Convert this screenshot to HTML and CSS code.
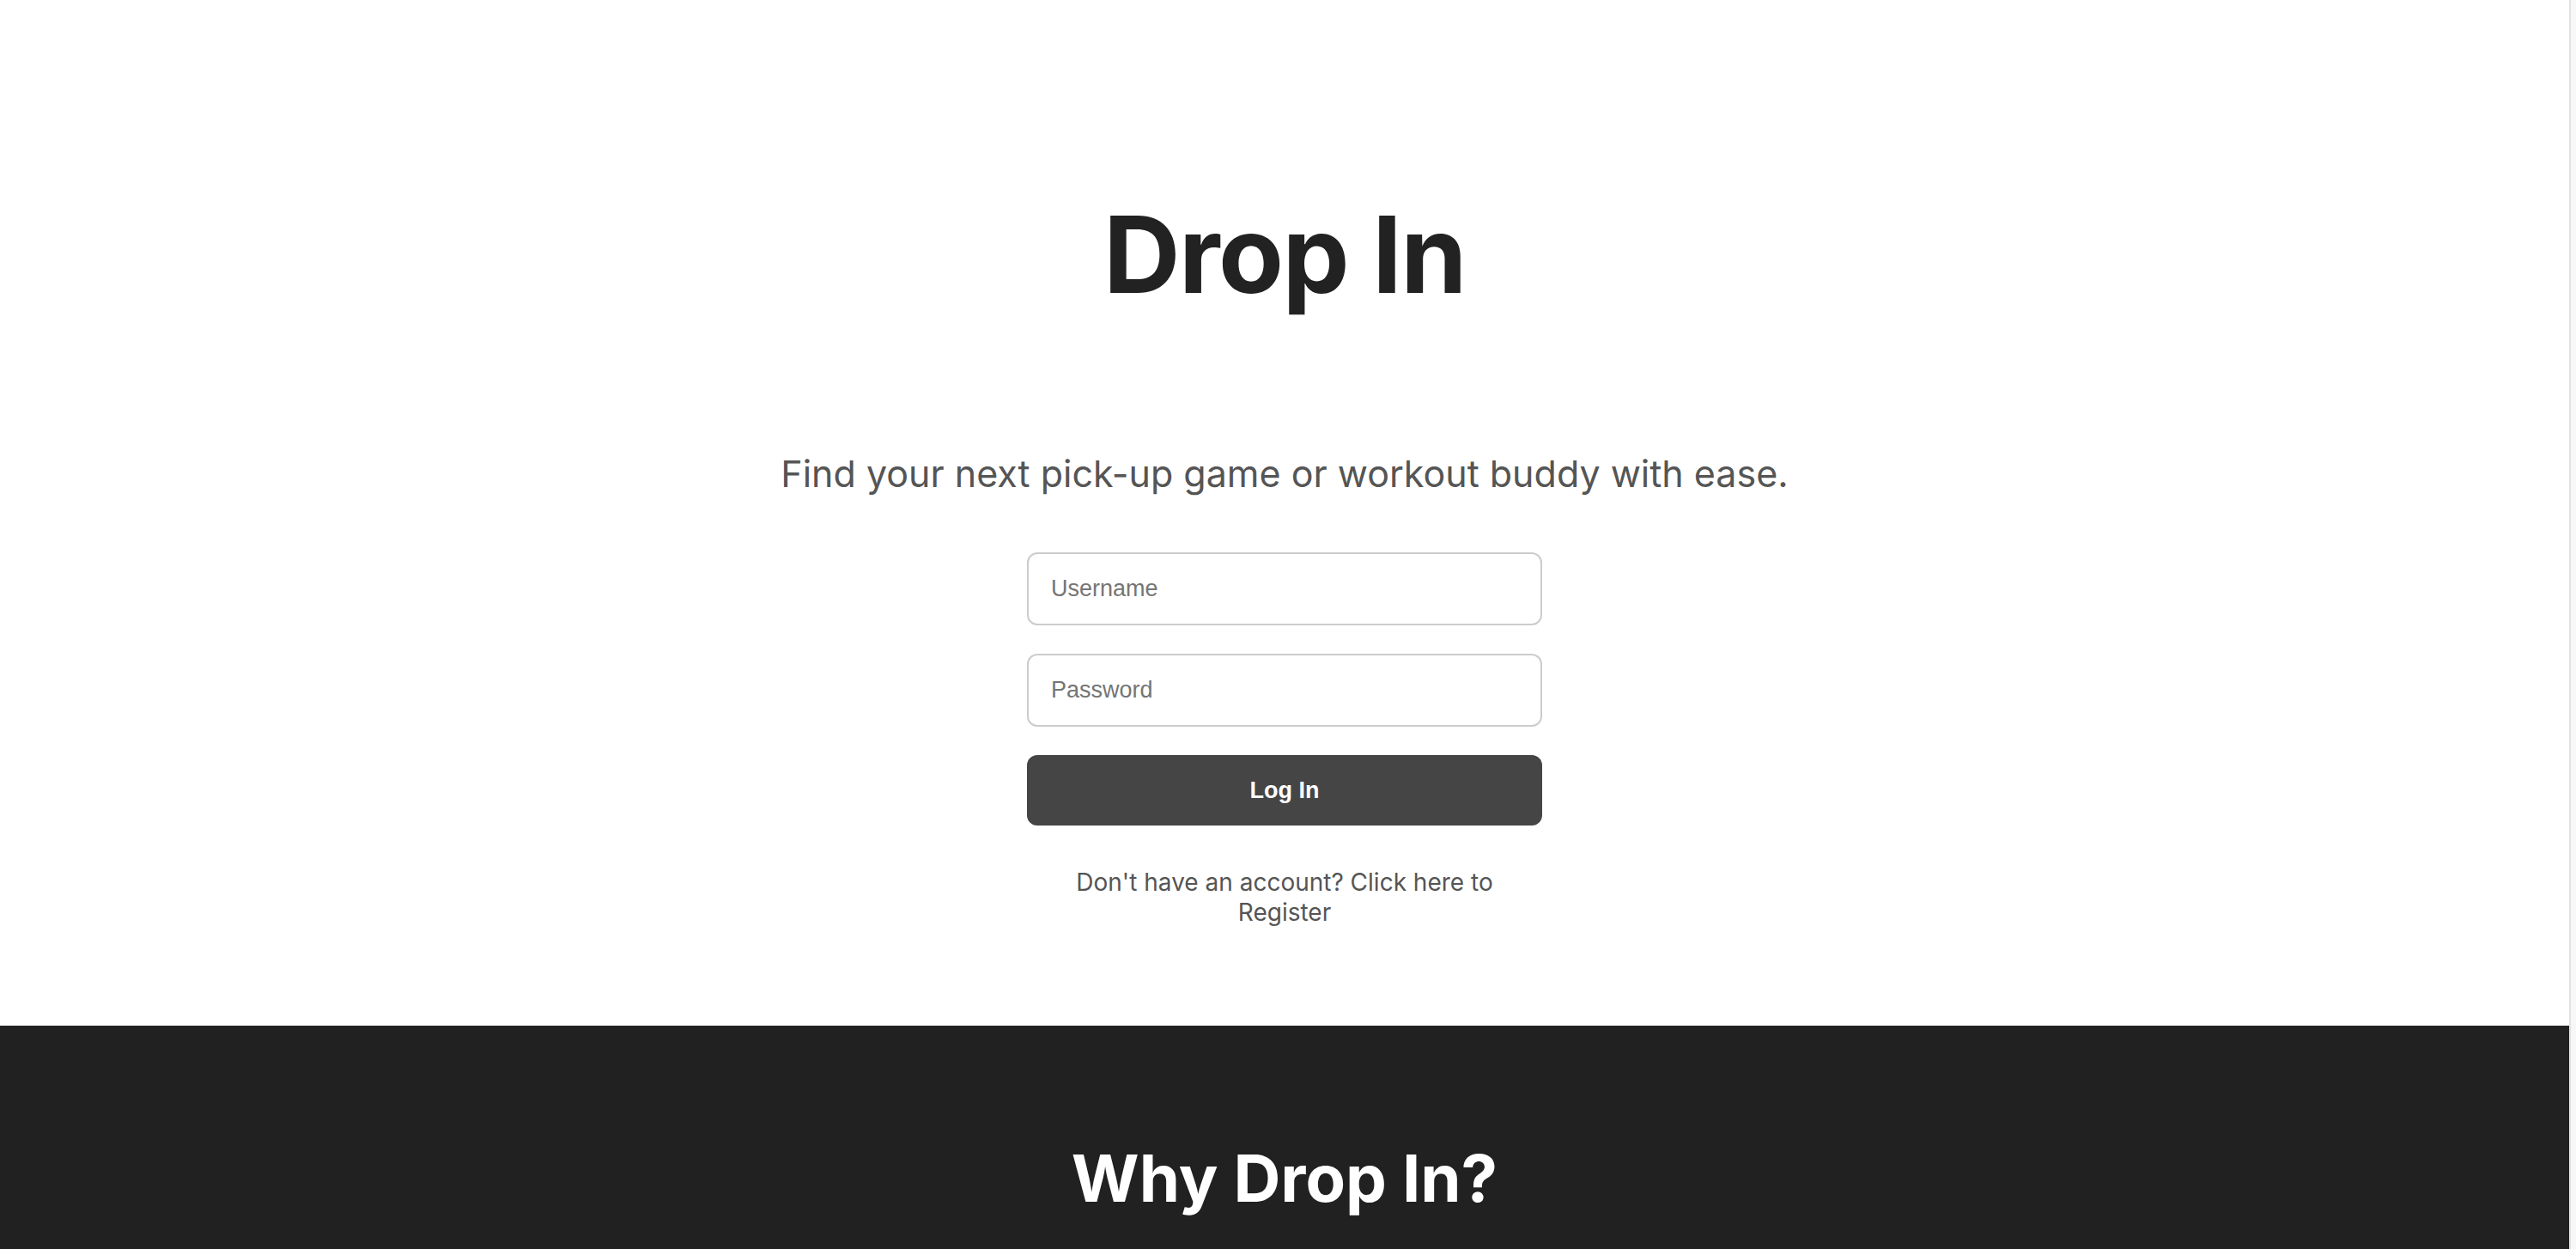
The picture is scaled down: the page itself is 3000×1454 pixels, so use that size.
FILE: index.html
```html
<!DOCTYPE html>
<html lang="en">
<head>
<meta charset="utf-8">
<title>Drop In</title>
<link rel="stylesheet" href="styles.css">
</head>
<body>
  <section class="hero">
    <h1 class="hero-title">Drop In</h1>
    <p class="hero-subtitle">Find your next pick-up game or workout buddy with ease.</p>
    <form class="login-form">
      <input class="field" type="text" placeholder="Username">
      <input class="field" type="password" placeholder="Password">
      <button class="login-btn" type="button">Log In</button>
    </form>
    <p class="register-link">Don't have an account? Click here to Register</p>
  </section>
  <section class="why">
    <h2 class="why-title">Why Drop In?</h2>
  </section>
</body>
</html>
```
FILE: styles.css
```css
html {
  background: #f7f7f7;
}
body {
  margin: 0 6px 0 0;
  border-right: 2px solid #e2e2e2;
  background: #ffffff;
  font-family: Inter, "Noto Sans", sans-serif;
  color: #222222;
}
.hero {
  height: 1194px;
  box-sizing: border-box;
  padding-top: 221px;
  display: flex;
  flex-direction: column;
  align-items: center;
  background: #ffffff;
}
.hero-title {
  margin: 0;
  font-size: 124px;
  line-height: 150px;
  font-weight: 700;
  letter-spacing: -1.5px;
  color: #222222;
}
.hero-subtitle {
  margin: 153px 0 0;
  font-size: 43px;
  line-height: 54px;
  font-weight: 400;
  color: #555555;
}
.login-form {
  margin-top: 65px;
  width: 600px;
  display: flex;
  flex-direction: column;
  gap: 33px;
}
.field {
  box-sizing: border-box;
  width: 100%;
  height: 85px;
  padding: 0 26px;
  border: 2px solid #cccccc;
  border-radius: 12px;
  font-family: "Liberation Sans", Arial, sans-serif;
  font-size: 27px;
  color: #222222;
  background: #ffffff;
  outline: none;
}
.field::placeholder {
  color: #757575;
}
.login-btn {
  height: 82px;
  border: none;
  border-radius: 12px;
  background: #454545;
  color: #ffffff;
  font-family: "Liberation Sans", Arial, sans-serif;
  font-weight: 700;
  font-size: 27px;
  cursor: pointer;
}
.register-link {
  margin: 49px 0 0;
  width: 510px;
  text-align: center;
  font-size: 28px;
  line-height: 35px;
  color: #555555;
}
.why {
  background: #212121;
  padding: 131px 0 200px;
  display: flex;
  justify-content: center;
}
.why-title {
  margin: 0;
  font-size: 76px;
  line-height: 92px;
  font-weight: 700;
  color: #ffffff;
}
```
